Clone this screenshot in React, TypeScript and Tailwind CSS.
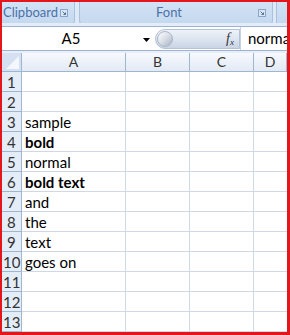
import React from "react";

const cells: Record<number, { text: string; bold?: boolean }> = {
  3: { text: "sample" },
  4: { text: "bold", bold: true },
  5: { text: "normal" },
  6: { text: "bold text", bold: true },
  7: { text: "and" },
  8: { text: "the" },
  9: { text: "text" },
  10: { text: "goes on" },
};

function Launcher() {
  return (
    <svg width="8" height="8" viewBox="0 0 8 8" className="shrink-0">
      <rect x="0.5" y="0.5" width="7" height="7" fill="#dbe6f4" stroke="#8aa5c8" />
      <path d="M2.5 2.5 L5.5 5.5 M5.5 3.5 V5.5 H3.5" stroke="#55729c" fill="none" strokeWidth="1" />
    </svg>
  );
}

function Corner() {
  return (
    <svg width="19" height="18" viewBox="0 0 19 18">
      <rect width="19" height="18" fill="#d5e1f2" />
      <path d="M17 3 L17 16 L4 16 Z" fill="#f4f7fc" />
    </svg>
  );
}

export default function App() {
  const rows = Array.from({ length: 13 }, (_, i) => i + 1);
  const cols = ["A", "B", "C", "D"];

  return (
    <div
      className="w-[290px] h-[335px] overflow-hidden bg-white border-[#e3161b] border-l-2 border-t-2 border-r-[3px] border-b-[3px] flex flex-col"
      style={{ fontFamily: "Lato, 'Open Sans', sans-serif" }}
    >
      {/* Ribbon group captions */}
      <div className="h-[21px] shrink-0 flex bg-[#bfd3ec]">
        <div className="w-[73px] h-full flex items-center justify-between pl-[1px] pr-[6px] bg-gradient-to-b from-[#d3e3f5] to-[#c4d8ef] rounded-br-[3px] border-r border-[#a9c0de]">
          <span className="text-[13px] text-[#4c72a8] leading-none">Clipboard</span>
          <Launcher />
        </div>
        <div className="w-[4px] h-full bg-[#dfe9f6]" />
        <div className="w-[194px] h-full flex items-center pl-[76px] pr-[6px] justify-between bg-gradient-to-b from-[#d3e3f5] to-[#c4d8ef] rounded-b-[3px] border-x border-[#a9c0de]">
          <span className="text-[13px] text-[#4c72a8] leading-none">Font</span>
          <Launcher />
        </div>
        <div className="w-[3px] h-full bg-[#dfe9f6]" />
        <div className="flex-1 h-full bg-gradient-to-b from-[#d3e3f5] to-[#c4d8ef] border-l border-[#a9c0de]" />
      </div>
      <div className="h-[3px] shrink-0 bg-[#e3ecf8]" />

      {/* Formula bar */}
      <div className="h-[25px] shrink-0 flex items-center bg-white border-t border-b border-[#9eb3cf]">
        <div className="w-[148px] h-full flex items-center relative">
          <span className="w-[138px] text-center text-[15px] text-black leading-none">A5</span>
          <svg width="7" height="4" viewBox="0 0 7 4" className="absolute left-[141px] top-[11px]">
            <path d="M0 0 H7 L3.5 4 Z" fill="#000" />
          </svg>
        </div>
        <div className="w-[85px] h-[20px] ml-[5px] rounded-l-full flex items-center justify-between bg-gradient-to-b from-[#eef2f8] via-[#dde5f0] to-[#c9d4e4] border border-[#b3c2d8]">
          <div className="w-[16px] h-[16px] ml-[1px] rounded-full bg-gradient-to-br from-[#ffffff] via-[#d9dee6] to-[#a7b2c2] border border-[#aab6c7]" />
          <span
            className="mr-[5px] text-[14px] italic text-[#333] leading-none"
            style={{ fontFamily: "'Liberation Serif', serif" }}
          >
            f<sub className="text-[9px]">x</sub>
          </span>
        </div>
        <div className="flex-1 min-w-0 h-full flex items-center pl-[7px] border-l border-[#c6d3e4] overflow-hidden">
          <span className="text-[15px] text-black leading-none whitespace-nowrap">normal</span>
        </div>
      </div>
      <div className="h-[2px] shrink-0 bg-[#e8eef7]" />

      {/* Grid */}
      <div className="grid grid-cols-[20px_104px_64px_64px_33px] grid-rows-[19px_repeat(13,20px)]">
        <div className="border-r border-b border-[#9eb6ce] bg-[#d5e1f2]">
          <Corner />
        </div>
        {cols.map((c) => (
          <div
            key={c}
            className="flex items-center justify-center border-r border-b border-[#9eb6ce] bg-gradient-to-b from-[#f6f9fd] to-[#e3eaf5] text-[14px] text-[#333] leading-none"
          >
            {c}
          </div>
        ))}
        {rows.map((r) => (
          <React.Fragment key={r}>
            <div
              className={`flex items-end pb-[1px] border-r border-b border-[#9eb6ce] bg-[#e4ecf7] text-[15px] text-[#333] leading-none ${
                r >= 10 ? "pl-[1px]" : "pl-[5px]"
              }`}
            >
              {r}
            </div>
            <div className="flex items-end pb-[1px] pl-[3px] border-r border-b border-[#d0d7e5] text-[15px] text-black leading-none whitespace-nowrap">
              {cells[r] && (
                <span className={cells[r].bold ? "font-bold" : ""}>{cells[r].text}</span>
              )}
            </div>
            <div className="border-r border-b border-[#d0d7e5]" />
            <div className="border-r border-b border-[#d0d7e5]" />
            <div className="border-b border-[#d0d7e5]" />
          </React.Fragment>
        ))}
      </div>
    </div>
  );
}
